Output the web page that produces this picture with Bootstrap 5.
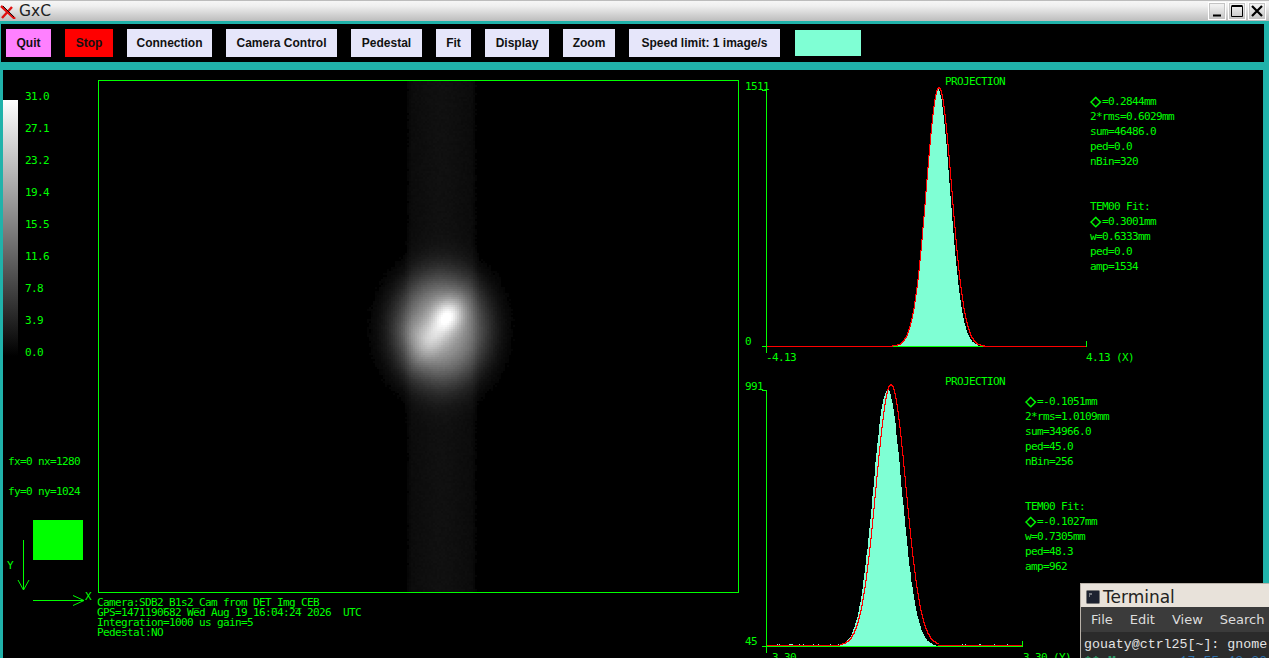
<!DOCTYPE html>
<html lang="en">
<head>
<meta charset="utf-8">
<title>GxC</title>
<link href="https://cdn.jsdelivr.net/npm/bootstrap@5.3.0/dist/css/bootstrap.min.css" rel="stylesheet">
<style>
html,body{height:658px;overflow:hidden;background:#20b2aa}
.app-window{position:relative;width:1269px;height:658px;background:#20b2aa;overflow:hidden}
.title-strip{height:21px;background:linear-gradient(#f6f6f6 0,#efefef 25%,#bdbdbd 100%);border-top:1px solid #bcbcbc;font:15.5px "DejaVu Sans",sans-serif;color:#222;margin-bottom:3px;padding-right:3px}
.title-strip .name{margin-left:3px;line-height:19px}
.wm-btn{width:18px;height:18px;margin-left:2px;border:1px solid #fff;outline:1px solid #c4c4c4;outline-offset:-2px;background:transparent;padding:0;display:block}
.wm-btn svg{display:block}
.tool-strip{height:38px;margin-left:1px;margin-right:5px;background:#000;padding-left:5px;gap:14px}
.tool-btn{height:28px;padding:0;font:bold 12px/28px "Liberation Sans",sans-serif;border:0;border-radius:0;color:#111;background:#e6e6fa;text-align:center}
.tool-btn:hover{background:#e6e6fa;color:#111}
.w-quit{width:45px;background:#ff80ff}.w-quit:hover{background:#ff80ff}
.w-stop{width:48px;background:#f00}.w-stop:hover{background:#f00}
.w-conn{width:85px}.w-cam{width:111px}.w-ped{width:71px}.w-fit{width:35px}.w-disp{width:64px}.w-zoom{width:52px}.w-speed{width:151px}
.swatch{width:66px;height:26px;background:#7fffd4;margin-left:1px}
.work-area{height:588px;margin-top:8px;margin-left:3px;margin-right:6px;background:#000;color:#0f0;overflow:hidden}
.work-area svg{display:block;flex:none}
.gx{font:11px "DejaVu Sans Mono",monospace;letter-spacing:-.62px;fill:#0f0;white-space:pre}
.gx .sym{font-size:19px;letter-spacing:.6px}
.image-col{width:642px;flex:none;padding-top:10px}
.image-frame{border:1px solid #0f0;margin-left:1px;width:641px;height:513px;overflow:hidden}
.image-frame canvas{display:block;margin:0}
.caption-block{font:11px/10px "DejaVu Sans Mono",monospace;letter-spacing:-.62px;white-space:pre;color:#0f0;padding-top:5px}
.term-win{position:absolute;left:1080px;top:583px;width:189px;height:75px;background:#2e3436;border:1px solid #b9b2a9;border-right:0;border-bottom:0;overflow:hidden}
.term-head{height:23px;background:#e8e2da;color:#222;font:17px "DejaVu Sans",sans-serif;padding:2px 0 0 5px;gap:3px;white-space:nowrap}
.term-menu{height:25px;background:#3b3b3b;color:#ddd;font:13px "DejaVu Sans",sans-serif;white-space:nowrap;padding-left:10px;gap:17px}
.term-body{background:#2b2b2b;color:#e4e4e4;font:13.27px/17px "Liberation Mono",monospace;padding:4px 0 0 3px;white-space:pre}
.term-body .m1{color:#2e9a6a;font-weight:bold}.term-body .m2{color:#2f6fa8}
</style>
</head>
<body>
<div class="app-window">
  <div class="title-strip d-flex align-items-center">
    <svg width="16" height="16" viewBox="0 0 16 16" class="ms-0 flex-none"><path d="M1 3 L15 16 M12 4 L2 15" stroke="#e01010" stroke-width="2.4" fill="none"/><path d="M3 3 L14 14" stroke="#111" stroke-width="1" fill="none"/></svg>
    <span class="name">GxC</span>
    <div class="ms-auto d-flex">
      <button class="wm-btn" aria-label="Minimize"><svg width="16" height="16"><path d="M4 12.5h8" stroke="#000" stroke-width="2"/></svg></button>
      <button class="wm-btn" aria-label="Maximize"><svg width="16" height="16"><path d="M2.5 3.5h11v10h-11z" fill="none" stroke="#000" stroke-width="1"/><path d="M2.5 3h11" stroke="#000" stroke-width="2"/></svg></button>
      <button class="wm-btn" aria-label="Close"><svg width="16" height="16"><path d="M3 3l10 10M13 3L3 13" stroke="#000" stroke-width="2.2"/></svg></button>
    </div>
  </div>

  <div class="tool-strip d-flex align-items-center">
    <button class="btn tool-btn w-quit">Quit</button>
    <button class="btn tool-btn w-stop">Stop</button>
    <button class="btn tool-btn w-conn">Connection</button>
    <button class="btn tool-btn w-cam">Camera Control</button>
    <button class="btn tool-btn w-ped">Pedestal</button>
    <button class="btn tool-btn w-fit">Fit</button>
    <button class="btn tool-btn w-disp">Display</button>
    <button class="btn tool-btn w-zoom">Zoom</button>
    <button class="btn tool-btn w-speed">Speed limit: 1 image/s</button>
    <div class="swatch"></div>
  </div>

  <div class="work-area d-flex">
    <svg width="94" height="588" viewBox="3 70 94 588">
      <defs><linearGradient id="cbar" x1="0" y1="0" x2="0" y2="1"><stop offset="0" stop-color="#fff"/><stop offset="1" stop-color="#000"/></linearGradient></defs>
      <rect x="3" y="100" width="15" height="256" fill="url(#cbar)"/>
      <g class="gx">
        <text x="25" y="100">31.0</text><text x="25" y="132">27.1</text><text x="25" y="164">23.2</text>
        <text x="25" y="196">19.4</text><text x="25" y="228">15.5</text><text x="25" y="260">11.6</text>
        <text x="25" y="292">7.8</text><text x="25" y="324">3.9</text><text x="25" y="356">0.0</text>
        <text x="8" y="465">fx=0 nx=1280</text><text x="8" y="495">fy=0 ny=1024</text>
        <text x="7" y="569">Y</text><text x="85" y="600">X</text>
      </g>
      <rect x="33" y="520" width="50" height="40" fill="#0f0"/>
      <path d="M23.5 540V590M18 580L23.5 590L29 580M33 600.5H84M73 595.5L84 600.5L73 605.5" fill="none" stroke="#0f0" stroke-width="1"/>
    </svg>

    <div class="image-col">
      <div class="image-frame"><canvas id="beam" width="640" height="511"></canvas></div>
      <div class="caption-block">Camera:SDB2_B1s2_Cam from DET_Img_CEB
GPS=1471190682 Wed Aug 19 16:04:24 2026  UTC
Integration=1000 us gain=5
Pedestal:NO</div>
    </div>

    <svg width="524" height="588" viewBox="739 70 524 588">
      <g class="gx">
        <text x="945" y="85">PROJECTION</text><text x="745" y="90">1511</text><text x="745" y="345">0</text>
        <text x="766" y="361">-4.13</text><text x="1086" y="361">4.13 (X)</text>
        <text x="1090" y="105"><tspan class="sym" dy="2">◇</tspan><tspan dy="-2">=0.2844mm</tspan></text><text x="1090" y="120">2*rms=0.6029mm</text><text x="1090" y="135">sum=46486.0</text><text x="1090" y="150">ped=0.0</text><text x="1090" y="165">nBin=320</text>
        <text x="1090" y="210">TEM00 Fit:</text><text x="1090" y="225"><tspan class="sym" dy="2">◇</tspan><tspan dy="-2">=0.3001mm</tspan></text><text x="1090" y="240">w=0.6333mm</text><text x="1090" y="255">ped=0.0</text><text x="1090" y="270">amp=1534</text>

        <text x="945" y="385">PROJECTION</text><text x="745" y="390">991</text><text x="745" y="645">45</text>
        <text x="766" y="661">-3.30</text><text x="1023" y="661">3.30 (Y)</text>
        <text x="1025" y="405"><tspan class="sym" dy="2">◇</tspan><tspan dy="-2">=-0.1051mm</tspan></text><text x="1025" y="420">2*rms=1.0109mm</text><text x="1025" y="435">sum=34966.0</text><text x="1025" y="450">ped=45.0</text><text x="1025" y="465">nBin=256</text>
        <text x="1025" y="510">TEM00 Fit:</text><text x="1025" y="525"><tspan class="sym" dy="2">◇</tspan><tspan dy="-2">=-0.1027mm</tspan></text><text x="1025" y="540">w=0.7305mm</text><text x="1025" y="555">ped=48.3</text><text x="1025" y="570">amp=962</text>
      </g>
      <g shape-rendering="crispEdges" fill="none" stroke-width="1">
        <path id="fill1" fill="#7fffd4" stroke="none"/>
        <path d="M766.5 90V353M762 346.5H767M762 90.5H767M1086.5 341V347" stroke="#0f0"/>
        <path d="M892 346.5H983" stroke="#0f0"/>
        <path d="M767 346.5H892M983 346.5H1086" stroke="#f00"/>
        <path id="fit1" stroke="#f00"/>

        <path id="fill2" fill="#7fffd4" stroke="none"/>
        <path d="M766.5 390V653M762 646.5H1023M762 390.5H767M1022.5 641V647" stroke="#0f0"/>
        <path d="M767 645.5H840M938 645.5H1022" stroke="#f00"/>
        <path id="fit2" stroke="#f00"/>
      </g>
    </svg>
  </div>

  <div class="term-win">
    <div class="term-head d-flex align-items-center">
      <svg width="14" height="14" viewBox="0 0 14 14"><rect x=".5" y=".5" width="13" height="13" rx="1" fill="#1d2230" stroke="#777"/><path d="M3 4h3M3 6h1" stroke="#ccc"/></svg>
      <span>Terminal</span>
    </div>
    <div class="term-menu d-flex align-items-center"><span>File</span><span>Edit</span><span>View</span><span>Search</span></div>
    <div class="term-body">gouaty@ctrl25[~]: gnome
<span class="m1">** Message</span>: <span class="m2">17:55:42.20</span></div>
  </div>
</div>

<script src="https://cdn.jsdelivr.net/npm/bootstrap@5.3.0/dist/js/bootstrap.bundle.min.js"></script>
<script>
(function(){
  var seed=7; function rnd(){seed=(seed*16807)%2147483647;return seed/2147483647;}
  function G(x,c,s){return Math.exp(-(x-c)*(x-c)/(2*s*s));}
  function hist(id,x0,x1,c,s,amp,base,noise){
    var d='M'+x0+' '+base;
    for(var x=x0;x<x1;x++){
      var h=amp*G(x+.5,c,s);
      h+= (rnd()-.5)*noise*Math.sqrt(Math.max(h,0)/amp)*2;
      if(h<1) h = (noise>2 && rnd()>.9) ? 2 : 0;
      var y=Math.round(base-h);
      d+='V'+y+'H'+(x+1);
    }
    document.getElementById(id).setAttribute('d',d+'V'+base+'Z');
  }
  function fit(id,x0,x1,c,s,amp,base){
    var d='',py=null;
    for(var x=x0;x<=x1;x++){
      var y=Math.round(base-amp*G(x,c,s))+.5;
      d+= py===null ? 'M'+x+' '+y : 'V'+y+'H'+(x+1);
      py=y;
    }
    document.getElementById(id).setAttribute('d',d);
  }
  hist('fill1',893,983,938,12.1,257,346,1.2);
  fit('fit1',892,984,938,12.8,259,346);
  hist('fill2',775,1016,887.5,14.5,256,646,3);
  fit('fit2',840,938,890,15,261,645);

  // Camera image: 2D intensity model with sensor noise, drawn in 2x2 blocks
  var cv=document.getElementById('beam'),ctx=cv.getContext('2d');
  ctx.fillStyle='#000';ctx.fillRect(0,0,640,511);
  for(var py=0;py<511;py+=2){
    for(var px=0;px<640;px+=2){
      var X=px+99,Y=py+81,v=0;
      var e=Math.abs(X-440.5);
      v+=.062*Math.min(1,Math.max(0,(38-e)/8))*(.62+.38*Math.exp(-e*e/(2*18*18)));
      var dx=(X-440)/47,dy=(Y-328)/54,r=Math.sqrt(dx*dx+dy*dy);
      v+=.56*Math.exp(-Math.pow(r,2.8));
      var lx=X-414,ly=Y-333;
      v+=.08*Math.exp(-(lx*lx+ly*ly)/(2*11*11));
      var ax=X-438,ay=Y-328,u=(-.58*ax+.81*ay),w=(.81*ax+.58*ay);
      v+=.25*Math.exp(-(u*u/(2*24*24)+w*w/(2*9.5*9.5)));
      var bx=X-447,by=Y-314;
      v+=.22*Math.exp(-(bx*bx+by*by)/(2*10*10));
      v+=(rnd()-.5)*.012;
      v=Math.max(0,Math.min(1,v));
      if(v<.02) continue;
      var c=Math.round(v*255);ctx.fillStyle='rgb('+c+','+c+','+c+')';ctx.fillRect(px,py,2,2);
    }
  }
})();
</script>
</body>
</html>
